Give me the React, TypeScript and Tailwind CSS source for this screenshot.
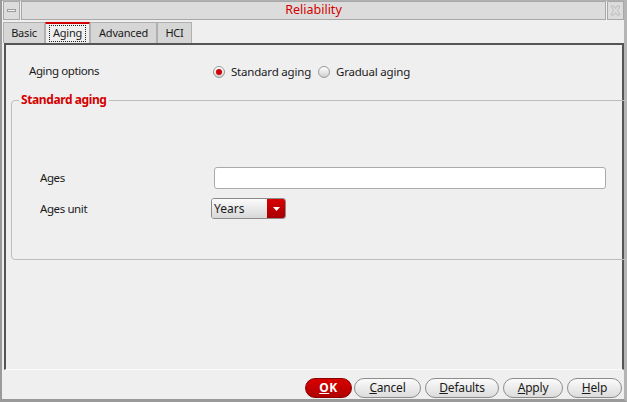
import React from "react";

const font = { fontFamily: '"Noto Sans", "Open Sans", sans-serif' };

function Radio({ checked, label }: { checked?: boolean; label: string }) {
  return (
    <div className="flex items-center gap-[6px]">
      <div className="w-[12px] h-[12px] rounded-full border border-[#9a9a9a] bg-gradient-to-b from-[#ffffff] to-[#cfcfcf] flex items-center justify-center">
        {checked && <div className="w-[6px] h-[6px] rounded-full bg-[#d10000]" />}
      </div>
      <span className="text-[11.5px] tracking-[-0.2px] text-[#1a1a1a]">{label}</span>
    </div>
  );
}

function Btn({ children, w, primary }: { children: React.ReactNode; w: string; primary?: boolean }) {
  return (
    <div
      className={
        "h-[20px] rounded-full flex items-center justify-center text-[12px] " +
        w +
        (primary
          ? " bg-gradient-to-b from-[#d80000] to-[#b00000] border border-[#8a0000] text-white font-bold tracking-[0.5px]"
          : " bg-gradient-to-b from-[#fbfbfb] to-[#dcdcdc] border border-[#8c8c8c] text-[#1a1a1a] tracking-[-0.2px]")
      }
    >
      {children}
    </div>
  );
}

export default function App() {
  return (
    <div className="w-[627px] h-[402px] bg-[#efefef] overflow-hidden text-[#1a1a1a]" style={font}>
      <div className="w-full h-full border-l-[2px] border-r-[3px] border-b-[3px] border-l-[#9a9a9a] border-r-[#b5b5b5] border-b-[#9a9a9a] flex flex-col">
        {/* title bar */}
        <div className="h-[20px] flex gap-[1px] pl-[1px] pr-[0px] border-t border-t-[#b0b0b0]">
          <div className="w-[17px] h-[19px] bg-[#dcdcdc] border border-[#a8a8a8] flex items-center justify-center">
            <div className="w-[9px] h-[3px] border border-[#9a9a9a] bg-[#f4f4f4]" />
          </div>
          <div className="flex-1 h-[19px] bg-[#dcdcdc] border border-[#a8a8a8] flex items-center justify-center">
            <span className="text-[12.5px] text-[#d40000] leading-none">Reliability</span>
          </div>
          <div className="w-[17px] h-[19px] bg-[#dcdcdc] border border-[#a8a8a8] flex items-center justify-center">
            <svg width="11" height="11" viewBox="0 0 11 11">
              <path d="M1 1 L4 1 L5.5 3.5 L7 1 L10 1 L7.5 5.5 L10 10 L7 10 L5.5 7.5 L4 10 L1 10 L3.5 5.5 Z" fill="none" stroke="#b8b8b8" strokeWidth="0.8" />
            </svg>
          </div>
        </div>
        {/* tabs */}
        <div className="mt-[2px] pl-[1px] flex h-[21px] items-stretch text-[11px] tracking-[-0.2px]">
          <div className="w-[42px] bg-[#d6d6d6] border border-b-0 border-[#b0b0b0] flex items-center justify-center">Basic</div>
          <div className="w-[45px] bg-[#efefef] border-t-[2px] border-t-[#d00000] border-x border-x-[#b0b0b0] flex items-center justify-center">
            <span className="border border-dotted border-[#222] px-[3px] h-[17px] flex items-center">Aging</span>
          </div>
          <div className="w-[67px] bg-[#d6d6d6] border border-b-0 border-[#b0b0b0] flex items-center justify-center">Advanced</div>
          <div className="w-[35px] bg-[#d6d6d6] border border-b-0 border-[#b0b0b0] flex items-center justify-center">HCI</div>
        </div>
        {/* panel */}
        <div className="ml-[2px] h-[327px] border-t-[2px] border-l-[2px] border-r-[2px] border-[#555555] border-b border-b-[#fafafa] flex flex-col">
          <div className="mt-[16px] h-[20px] flex items-center">
            <div className="pl-[23px] w-[207px] text-[11.5px] tracking-[-0.4px]">Aging options</div>
            <div className="flex items-center gap-[7px] mt-[2px]">
              <Radio checked label="Standard aging" />
              <Radio label="Gradual aging" />
            </div>
          </div>
          <fieldset className="mt-[12px] ml-[5px] mr-[7px] h-[167px] border border-[#bdbdbd] rounded-[4px] px-[28px]">
            <legend className="ml-[-21px] px-[2px] text-[12px] font-bold tracking-[-0.4px] text-[#d40000] leading-[14px]">Standard aging</legend>
            <div className="mt-[60px] flex items-center">
              <div className="w-[174px] text-[11.5px] tracking-[-0.4px]">Ages</div>
              <div className="w-[392px] h-[22px] bg-white border border-[#aaaaaa] rounded-[3px]" />
            </div>
            <div className="mt-[9px] flex items-center">
              <div className="w-[171px] text-[11.5px] tracking-[-0.4px]">Ages unit</div>
              <div className="w-[75px] h-[21px] flex rounded-[3px] border border-[#8c8c8c] overflow-hidden">
                <div className="flex-1 bg-gradient-to-b from-[#fbfbfb] to-[#d8d8d8] flex items-center pl-[2px] text-[12px]">Years</div>
                <div className="w-[18px] bg-gradient-to-b from-[#d80000] to-[#a80000] flex items-center justify-center">
                  <svg width="7" height="4" viewBox="0 0 7 4">
                    <path d="M0 0 L7 0 L3.5 4 Z" fill="#ffffff" />
                  </svg>
                </div>
              </div>
            </div>
          </fieldset>
        </div>
        {/* buttons */}
        <div className="mt-[8px] flex justify-end pr-[2px]">
          <Btn w="w-[47px]" primary>
            <span><span className="underline">O</span>K</span>
          </Btn>
          <div className="ml-[2px]">
            <Btn w="w-[67px]">
              <span><span className="underline">C</span>ancel</span>
            </Btn>
          </div>
          <div className="ml-[4px]">
            <Btn w="w-[74px]">
              <span><span className="underline">D</span>efaults</span>
            </Btn>
          </div>
          <div className="ml-[4px]">
            <Btn w="w-[60px]">
              <span><span className="underline">A</span>pply</span>
            </Btn>
          </div>
          <div className="ml-[4px]">
            <Btn w="w-[55px]">
              <span><span className="underline">H</span>elp</span>
            </Btn>
          </div>
        </div>
      </div>
    </div>
  );
}
